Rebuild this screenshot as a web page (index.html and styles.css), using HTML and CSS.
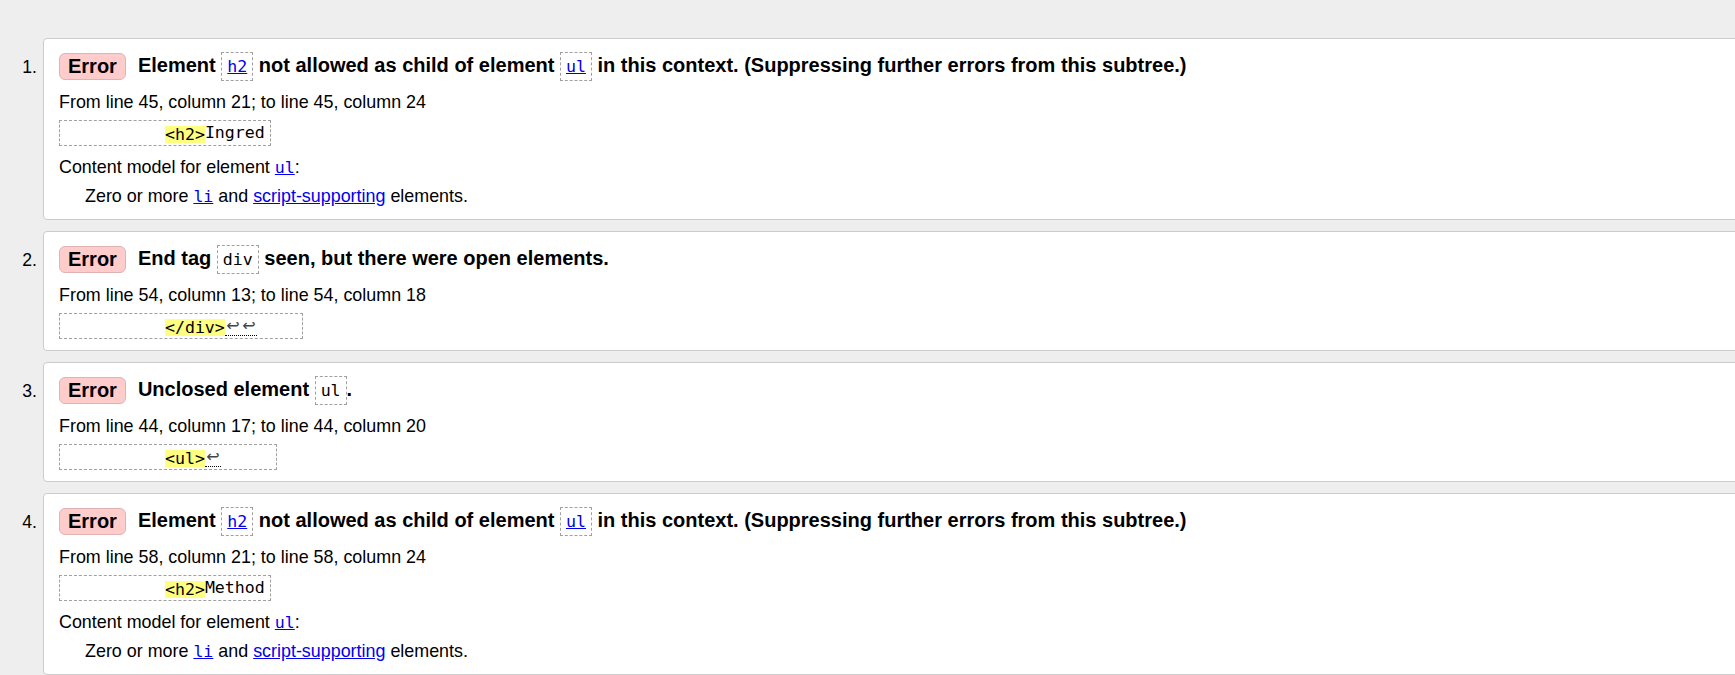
FILE: index.html
```html
<!DOCTYPE html>
<html lang="en">
<head>
<meta charset="utf-8">
<title>Validation results</title>
<link rel="stylesheet" href="styles.css">
</head>
<body>
<ol class="results">
  <li class="item">
    <span class="num">1.</span>
    <div class="card">
      <p class="title"><strong class="badge">Error</strong><span class="msg">Element <a class="chip link" href="#">h2</a> not allowed as child of element <a class="chip link" href="#">ul</a> in this context. (Suppressing further errors from this subtree.)</span></p>
      <p class="loc">From line 45, column 21; to line 45, column 24</p>
      <code class="extract">          <b class="hl">&lt;h2&gt;</b>Ingred</code>
      <dl class="model">
        <dt>Content model for element <a class="mono link" href="#">ul</a>:</dt>
        <dd>Zero or more <a class="mono link" href="#">li</a> and <a class="link" href="#">script-supporting</a> elements.</dd>
      </dl>
    </div>
  </li>
  <li class="item">
    <span class="num">2.</span>
    <div class="card">
      <p class="title"><strong class="badge">Error</strong><span class="msg">End tag <code class="chip">div</code> seen, but there were open elements.</span></p>
      <p class="loc">From line 54, column 13; to line 54, column 18</p>
      <code class="extract">          <b class="hl">&lt;/div&gt;</b><span class="lf"><span class="arrow">↩</span><span class="arrow">↩</span></span>    </code>
    </div>
  </li>
  <li class="item">
    <span class="num">3.</span>
    <div class="card">
      <p class="title"><strong class="badge">Error</strong><span class="msg">Unclosed element <code class="chip">ul</code>.</span></p>
      <p class="loc">From line 44, column 17; to line 44, column 20</p>
      <code class="extract">          <b class="hl">&lt;ul&gt;</b><span class="lf"><span class="arrow">↩</span></span>     </code>
    </div>
  </li>
  <li class="item">
    <span class="num">4.</span>
    <div class="card">
      <p class="title"><strong class="badge">Error</strong><span class="msg">Element <a class="chip link" href="#">h2</a> not allowed as child of element <a class="chip link" href="#">ul</a> in this context. (Suppressing further errors from this subtree.)</span></p>
      <p class="loc">From line 58, column 21; to line 58, column 24</p>
      <code class="extract">          <b class="hl">&lt;h2&gt;</b>Method</code>
      <dl class="model">
        <dt>Content model for element <a class="mono link" href="#">ul</a>:</dt>
        <dd>Zero or more <a class="mono link" href="#">li</a> and <a class="link" href="#">script-supporting</a> elements.</dd>
      </dl>
    </div>
  </li>
</ol>
</body>
</html>
```
FILE: styles.css
```css
html, body {
  margin: 0;
  padding: 0;
  background: #eeeeee;
  overflow: hidden;
}

body {
  font-family: "Liberation Sans", Arial, sans-serif;
  font-size: 17.9px;
  color: #000;
}

.results {
  list-style: none;
  margin: 0;
  padding: 38px 0 0 0;
  width: 1760px;
}

.item {
  display: flex;
  align-items: baseline;
  margin-bottom: 11px;
}

.num {
  flex: 0 0 43px;
  box-sizing: border-box;
  text-align: right;
  padding-right: 6px;
  font-size: 17.6px;
}

.card {
  flex: 1;
  display: flex;
  flex-direction: column;
  align-items: flex-start;
  background: #fff;
  border: 1px solid #cccccc;
  border-radius: 4px;
  padding: 13px 15px 11px 15px;
}

.title {
  margin: 0;
  display: flex;
  align-items: center;
  gap: 12px;
  font-weight: bold;
  font-size: 20px;
  line-height: 27px;
  white-space: nowrap;
}

.badge {
  display: inline-block;
  box-sizing: border-box;
  height: 27px;
  line-height: 25px;
  padding: 0 8px;
  background: #ffcccc;
  border: 1px solid #dfb3b3;
  border-radius: 6px;
  font-weight: bold;
}

.chip {
  font-family: "DejaVu Sans Mono", "Liberation Mono", monospace;
  font-weight: normal;
  font-size: 16.6px;
  border: 1px dashed #a0a0a0;
  padding: 4px 5px;
  color: #000;
}

.link {
  color: #0000ee;
  text-decoration: underline;
}

.chip.link {
  color: #0000ee;
}

.mono {
  font-family: "DejaVu Sans Mono", "Liberation Mono", monospace;
  font-size: 16.6px;
}

.loc {
  margin: 11px 0 0 0;
  line-height: 22px;
}

.extract {
  display: block;
  margin-top: 7px;
  font-family: "DejaVu Sans Mono", "Liberation Mono", monospace;
  font-size: 16.6px;
  line-height: 24px;
  white-space: pre;
  border: 1px dashed #a0a0a0;
  padding: 0 5px;
}

.hl {
  font-weight: normal;
  background: #ffff80;
  display: inline-block;
  line-height: 17px;
  height: 17px;
  vertical-align: -2px;
}

.lf {
  border-bottom: 1px dotted #000;
}

.arrow {
  font-family: "DejaVu Sans", sans-serif;
  font-size: 16px;
  color: #444;
  display: inline-block;
  width: 16px;
  text-align: center;
  line-height: 16px;
}

.model {
  margin: 10px 0 0 0;
  line-height: 22px;
}

.model dt {
  margin: 0;
}

.model dd {
  margin: 6px 0 0 26px;
}
```
